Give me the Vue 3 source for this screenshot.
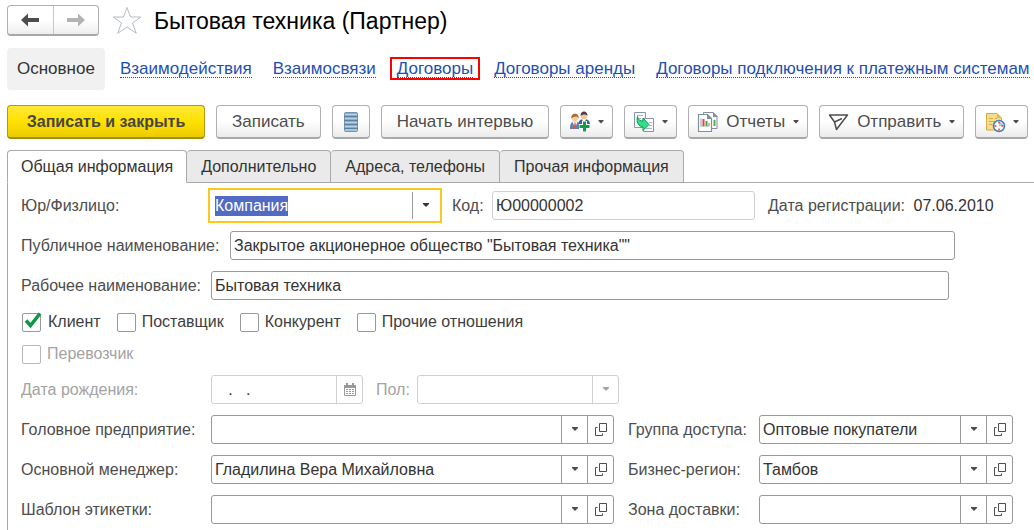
<script setup>
import { onMounted, ref } from 'vue'

const links = [
  { text: 'Взаимодействия' },
  { text: 'Взаимосвязи' },
  { text: 'Договоры', marked: true },
  { text: 'Договоры аренды' },
  { text: 'Договоры подключения к платежным системам' },
]
const tabs = ['Общая информация', 'Дополнительно', 'Адреса, телефоны', 'Прочая информация']
const activeTab = ref(0)

const kind = ref('Компания')
const kindInput = ref(null)
const publicName = ref('Закрытое акционерное общество "Бытовая техника""')
const workName = ref('Бытовая техника')
const relations = ref([
  { id: 'client', text: 'Клиент', on: true },
  { id: 'supplier', text: 'Поставщик', on: false },
  { id: 'rival', text: 'Конкурент', on: false },
  { id: 'other', text: 'Прочие отношения', on: false },
])
const lookups = [
  { id: 'head', text: 'Головное предприятие:', value: '' },
  { id: 'access', text: 'Группа доступа:', value: 'Оптовые покупатели', second: true },
  { id: 'manager', text: 'Основной менеджер:', value: 'Гладилина Вера Михайловна' },
  { id: 'region', text: 'Бизнес-регион:', value: 'Тамбов', second: true },
  { id: 'template', text: 'Шаблон этикетки:', value: '' },
  { id: 'zone', text: 'Зона доставки:', value: '', second: true },
]

onMounted(() => {
  kindInput.value.focus()
  kindInput.value.select()
})
</script>

<template>
  <div class="page">
    <header class="head">
      <div class="history">
        <button type="button" aria-label="Назад">
          <svg width="18" height="14" viewBox="0 0 18 14"><path d="M0 7 7 .5V5h11v4H7v4.500z" fill="#4d4d4d" /></svg>
        </button>
        <button type="button" aria-label="Вперед">
          <svg width="18" height="14" viewBox="0 0 18 14"><path d="M18 7 11 .5V5H0v4h11v4.500z" fill="#b3b3b3" /></svg>
        </button>
      </div>
      <button type="button" class="star" aria-label="В избранное">
        <svg width="30" height="29" viewBox="0 0 30 29"><path d="M15 1.500 18.500 11H28.800L20.500 17 24.300 27.300 15 21 5.700 27.300 9.500 17 1.200 11H11.500z" fill="#fff" stroke="#b5bcc6" /></svg>
      </button>
      <h1>Бытовая техника (Партнер)</h1>
    </header>

    <nav class="nav">
      <span class="current">Основное</span>
      <a v-for="l in links" :key="l.text" href="#" :class="{ marked: l.marked }">{{ l.text }}</a>
    </nav>

    <div class="toolbar">
      <button type="button" class="btn primary">Записать и закрыть</button>
      <button type="button" class="btn">Записать</button>
      <button type="button" class="btn icon" aria-label="Список">
        <svg width="14" height="20" viewBox="0 0 14 20">
          <rect x=".5" y=".5" width="13" height="19" rx="1" fill="#7da3c4" stroke="#6f94b5" />
          <path d="M1 2.500h12M1 6.500h12M1 10.500h12M1 14.500h12M1 18h12" stroke="#b9d2e6" stroke-width="1.500" />
          <path d="M0 4.500h14M0 8.500h14M0 12.500h14M0 16.500h14" stroke="#5b82a3" />
        </svg>
      </button>
      <button type="button" class="btn">Начать интервью</button>
      <button type="button" class="btn drop" aria-label="Добавить участника">
        <svg width="22" height="22" viewBox="0 0 22 22">
          <path d="M9 15c0-5 2-7 6-7s6 2 6 6z" fill="#3f5f8c" />
          <path d="m13 8 2 5 2-5z" fill="#fff" />
          <circle cx="15" cy="5" r="3.200" fill="#f3c79b" />
          <path d="M11.500 5c-.4-6 7.400-6 7 0-1-2-5-2-7 0z" fill="#4a3a46" />
          <path d="M1 18c0-5 1-7.500 5-7.500s5 2.500 5 7.500z" fill="#5d83ad" />
          <path d="m3.500 10.500 2.500 7 2.500-7z" fill="#fff" /><path d="M5.500 11.500h1l.8 6h-2.600z" fill="#e0523c" />
          <circle cx="6" cy="7" r="3.200" fill="#f7cfa2" />
          <path d="M2.300 7.500C1.500 1 10.500 1 9.700 7.500 8.500 4.500 5 5 2.300 7.500z" fill="#a56a2d" />
          <path d="M15.500 10v11M10 15.500h11" stroke="#fff" stroke-width="5" />
          <path d="M15.500 10.500v10M10.500 15.500h10" stroke="#109d4b" stroke-width="3" />
        </svg>
        <svg class="caret" width="6" height="4" viewBox="0 0 6 4"><path d="M.5 0h5v1L3 3.500.5 1z" /></svg>
      </button>
      <button type="button" class="btn drop" aria-label="Создать на основании">
        <svg width="22" height="22" viewBox="0 0 22 22">
          <path d="M1.500 1.500h11v15h-11z" fill="#f8fafb" stroke="#8796a3" />
          <path d="M4 4.500h6M4 7.500h4" stroke="#a9b5bf" />
          <path d="M10.500 7.500h10v13h-10z" fill="#f8fafb" stroke="#8796a3" />
          <path d="M16 11.500h3M16 14.500h3M13 17.500h6" stroke="#a9b5bf" />
          <path d="M4.500 5.500C5 9 7 10 10 10V7l6 6.500-6 6v-3.500C5.500 15.500 3 11 4.500 5.500z" fill="#2fe08a" stroke="#109d4b" />
        </svg>
        <svg class="caret" width="6" height="4" viewBox="0 0 6 4"><path d="M.5 0h5v1L3 3.500.5 1z" /></svg>
      </button>
      <button type="button" class="btn drop">
        <svg width="22" height="22" viewBox="0 0 22 22">
          <path d="M6.500 1.500H16l4 4v12H6.500z" fill="#fff" stroke="#7f8f9d" /><path d="M16 1v5h5z" fill="#7f8f9d" />
          <path d="M17.500 9v6" stroke="#4fb848" stroke-width="2" />
          <path d="M1.500 3.500h9l4 4v13h-13z" fill="#fff" stroke="#7f8f9d" stroke-width="1.200" /><path d="M10 3v5h5z" fill="#7f8f9d" />
          <path d="M4 7.500v8" stroke="#8fa3b3" /><path d="M3.500 15.500h9" stroke="#c4ced6" />
          <path d="M6.500 8v7" stroke="#ee3e3e" stroke-width="2" /><path d="M9.500 10v5" stroke="#35b035" stroke-width="2" /><path d="M12 12v3" stroke="#e05050" />
        </svg>
        <span>Отчеты</span>
        <svg class="caret" width="6" height="4" viewBox="0 0 6 4"><path d="M.5 0h5v1L3 3.500.5 1z" /></svg>
      </button>
      <button type="button" class="btn drop">
        <svg width="22" height="22" viewBox="0 0 22 22" fill="none" stroke="#4d4d4d" stroke-width="1.500" stroke-linejoin="round"><path d="M1.500 4h18L8.500 18.500 6.500 11z M6.500 11 14 7.500" /></svg>
        <span>Отправить</span>
        <svg class="caret" width="6" height="4" viewBox="0 0 6 4"><path d="M.5 0h5v1L3 3.500.5 1z" /></svg>
      </button>
      <button type="button" class="btn drop" aria-label="Напоминания">
        <svg width="22" height="22" viewBox="0 0 22 22">
          <path d="M2.500 2.500H13l4.500 4.500v12h-15z" fill="#f6de8a" stroke="#d3ac45" /><path d="M13 2.500V7h4.500z" fill="#e0b94e" />
          <path d="M5 7.500h4M11 7.500h2M5 10.500h6M5 13.500h3" stroke="#d3ac45" />
          <circle cx="15" cy="15" r="5.500" fill="#fff" stroke="#4a7db5" stroke-width="1.500" />
          <path d="M15 15v-4a4 4 0 0 1 4 4z" fill="#a8c5ea" />
          <path d="M15 10.500v2M15 17.500v2M10.500 15h2M17.500 15h2" stroke="#e43c3c" stroke-width="1.500" />
        </svg>
        <svg class="caret" width="6" height="4" viewBox="0 0 6 4"><path d="M.5 0h5v1L3 3.500.5 1z" /></svg>
      </button>
    </div>

    <div class="tabs" role="tablist">
      <button
        v-for="(t, i) in tabs" :key="t" type="button" role="tab"
        :aria-selected="i === activeTab" :class="{ active: i === activeTab }" @click="activeTab = i"
      >{{ t }}</button>
    </div>

    <main class="panel">
      <div class="row">
        <label class="name" for="kind">Юр/Физлицо:</label>
        <div class="focus-frame">
          <input id="kind" ref="kindInput" v-model="kind" type="text">
          <button type="button" aria-label="Выбрать">
            <svg class="caret" width="8" height="5" viewBox="0 0 8 5"><path d="M1 0h6v1L4 4 1 1z" /></svg>
          </button>
        </div>
        <label class="code-label" for="code">Код:</label>
        <div class="field light code"><input id="code" type="text" value="Ю00000002" readonly></div>
        <span class="reg">Дата регистрации: <b>07.06.2010</b></span>
      </div>

      <div class="row">
        <label class="name wide" for="public">Публичное наименование:</label>
        <div class="field long"><input id="public" v-model="publicName" type="text"></div>
      </div>
      <div class="row">
        <label class="name" for="work">Рабочее наименование:</label>
        <div class="field longer"><input id="work" v-model="workName" type="text"></div>
      </div>

      <div class="checks">
        <label v-for="r in relations" :key="r.id" class="check">
          <span class="box">
            <input v-model="r.on" type="checkbox">
            <svg v-if="r.on" width="18" height="16" viewBox="0 0 18 16"><path d="M2 7.500 6.500 12.500 16 .5" fill="none" stroke="#109648" stroke-width="3.500" /></svg>
          </span>
          {{ r.text }}
        </label>
      </div>
      <div class="checks">
        <label class="check off"><span class="box"><input type="checkbox" disabled></span>Перевозчик</label>
      </div>

      <div class="row off">
        <label class="name" for="birth">Дата рождения:</label>
        <div class="field light birth">
          <input id="birth" type="text" value="   .   ." disabled>
          <button type="button" aria-label="Календарь" disabled>
            <svg width="12" height="13" viewBox="0 0 12 13">
              <path d="M.5 2.500h11v10H.5z" fill="#fff" stroke="#999" /><path d="M0 2h12v3H0zM2 0h2v2H2zM8 0h2v2H8z" fill="#999" />
              <path d="M2 6.500h2M5 6.500h2M8 6.500h2M2 8.500h2M5 8.500h2M8 8.500h2M2 10.500h2M5 10.500h2M8 10.500h2" stroke="#999" />
            </svg>
          </button>
        </div>
        <label class="sex-label" for="sex">Пол:</label>
        <div class="field light sex">
          <div class="combo">
            <select id="sex" disabled><option></option></select>
            <span class="arrow"><svg class="caret" width="8" height="5" viewBox="0 0 8 5"><path d="M1 0h6v1L4 4 1 1z" /></svg></span>
          </div>
        </div>
      </div>

      <div class="lookups">
        <template v-for="l in lookups" :key="l.id">
          <label :for="l.id" :class="{ second: l.second }">{{ l.text }}</label>
          <div class="field">
            <div class="combo">
              <select :id="l.id"><option>{{ l.value }}</option></select>
              <span class="arrow"><svg class="caret" width="8" height="5" viewBox="0 0 8 5"><path d="M1 0h6v1L4 4 1 1z" /></svg></span>
            </div>
            <button type="button" aria-label="Открыть">
              <svg width="12" height="13" viewBox="0 0 12 13" fill="none" stroke="#4d4d4d"><path d="M4.500.5h7v8h-7zM2.500 4.500h-2v8h7v-2" /></svg>
            </button>
          </div>
        </template>
      </div>
    </main>
  </div>
</template>

<style>
html, body { background: #fff; overflow-x: hidden; }
</style>

<style scoped>
.page { font: 16px/20px "Liberation Sans", Arial, sans-serif; color: #4d4d4d; padding: 5px 0 0 7px; }
.page * { box-sizing: border-box; }
button, input, select { font: inherit; color: inherit; margin: 0; padding: 0; border: 0; background: none; border-radius: 0; outline: none; min-width: 0; }
svg { display: block; flex: none; overflow: visible; }
.caret { fill: currentColor; }

.head { display: flex; align-items: center; height: 31px; }
.history { display: flex; width: 92px; height: 31px; border: 1px solid #b0b0b0; border-bottom: 2px solid #a8a8a8; border-radius: 4px; background: linear-gradient(#fff 50%, #eee); }
.history button { flex: 1; display: flex; align-items: center; justify-content: center; }
.history button + button { border-left: 1px solid #c8c8c8; }
.star { margin-left: 13px; }
h1 { margin: 0 0 0 12px; font-size: 23px; line-height: 28px; font-weight: 400; color: #000; white-space: nowrap; }

.nav { display: flex; align-items: center; gap: 21px; margin-top: 12px; font-size: 17px; white-space: nowrap; }
.current { padding: 11px 10px; border-radius: 4px; background: #f1f1f1; color: #333; margin-right: -6px; }
.nav a { position: relative; color: #1e50b4; text-decoration: none; line-height: 17px; border-bottom: 1px dotted #1e50b4; }
.marked::after { content: ""; position: absolute; inset: -3px -7px; border: 2px solid #f00; }

.toolbar { display: flex; gap: 11px; margin-top: 15px; font-size: 17px; }
.btn { display: flex; align-items: center; justify-content: center; height: 34px; padding: 0 15px; border: 1px solid #b0b0b0; border-bottom: 2px solid #a8a8a8; border-radius: 4px; background: linear-gradient(#fff 50%, #ebebeb); white-space: nowrap; }
.primary { min-width: 198px; font-size: 16px; font-weight: 700; border-color: #b09a14; border-bottom-color: #a08c10; background: linear-gradient(#ffe838, #ffe100 50%, #eccb00); color: #464646; }
.icon { padding: 0 11px; }
.drop { padding: 0 8px; }
.drop span { margin: 0 8px 0 7px; }
.btn > svg:first-child + .caret { margin-left: 7px; }

.tabs { display: flex; margin-top: 11px; }
.tabs::after { content: ""; flex: 1; border-bottom: 1px solid #aaa; }
.tabs button { height: 33px; padding: 0 14px; border: 1px solid #aaa; border-left-width: 0; border-radius: 4px 4px 0 0; background: #eaeaea; color: #333; white-space: nowrap; }
.tabs button:first-child { border-left-width: 1px; padding: 0 13px; }
.tabs .active { background: #fff; border-bottom-color: transparent; }

.panel { border-left: 1px solid #aaa; padding: 8px 0 6px 13px; }
.row { display: flex; align-items: center; height: 29px; margin-bottom: 11px; white-space: nowrap; }
.name { width: 190px; }
.wide { width: 209px; }
.field { display: flex; min-width: 0; height: 29px; border: 1px solid #999; border-radius: 3px; background: #fff; color: #333; }
.field input { flex: 1; padding: 0 3px; }
.field button { flex: none; width: 26px; display: flex; align-items: center; justify-content: center; border-left: 1px solid #999; color: #4d4d4d; }
.light, .light button, .light .arrow { border-color: #d0d0d0; }
.combo { flex: 1; min-width: 0; display: grid; }
.combo select { grid-area: 1 / 1; appearance: none; padding: 0 30px 0 3px; opacity: 1; }
.arrow { grid-area: 1 / 1; justify-self: end; width: 26px; display: flex; align-items: center; justify-content: center; border-left: 1px solid #999; pointer-events: none; color: #4d4d4d; }

.focus-frame { display: flex; flex: 0 1 234px; min-width: 0; height: 35px; margin-left: -3px; padding: 2px; border: 2px solid #fbc91e; background: #fff; color: #333; }
.focus-frame input { flex: 1; padding: 0 3px; }
.focus-frame input::selection { background: rgba(79, 104, 194, .99); color: #fff; }
.focus-frame button { flex: none; width: 26px; display: flex; align-items: center; justify-content: center; border-left: 1px solid #999; }
.code-label { margin-left: 10px; width: 40px; }
.code { flex: 0 1 263px; }
.reg { margin-left: 13px; }
.reg b { font-weight: 400; color: #333; margin-left: 4px; }
.long { flex: 0 1 725px; }
.longer { flex: 0 1 738px; }

.checks { display: flex; gap: 15px; height: 20px; margin: 12px 0 11px; white-space: nowrap; }
.check { display: flex; align-items: center; gap: 6px; color: #404040; }
.box { display: grid; margin-left: 1px; }
.box input { grid-area: 1 / 1; width: 19px; height: 19px; appearance: none; border: 1px solid #999; border-radius: 2px; background: #fff; }
.box svg { grid-area: 1 / 1; pointer-events: none; margin-left: 2px; }
.off, .check.off, .off .field button, .off .arrow { color: #a3a3a3; }
.off .box input { border-color: #b8b8b8; }
.birth { flex: 0 1 152px; }
.sex-label { margin-left: 13px; width: 41px; }
.sex { flex: 0 1 202px; }
.lookups { display: grid; grid-template-columns: 190px minmax(0, 403px) 145px minmax(0, 254px); row-gap: 11px; align-items: center; white-space: nowrap; }
.second { padding-left: 14px; }
</style>
